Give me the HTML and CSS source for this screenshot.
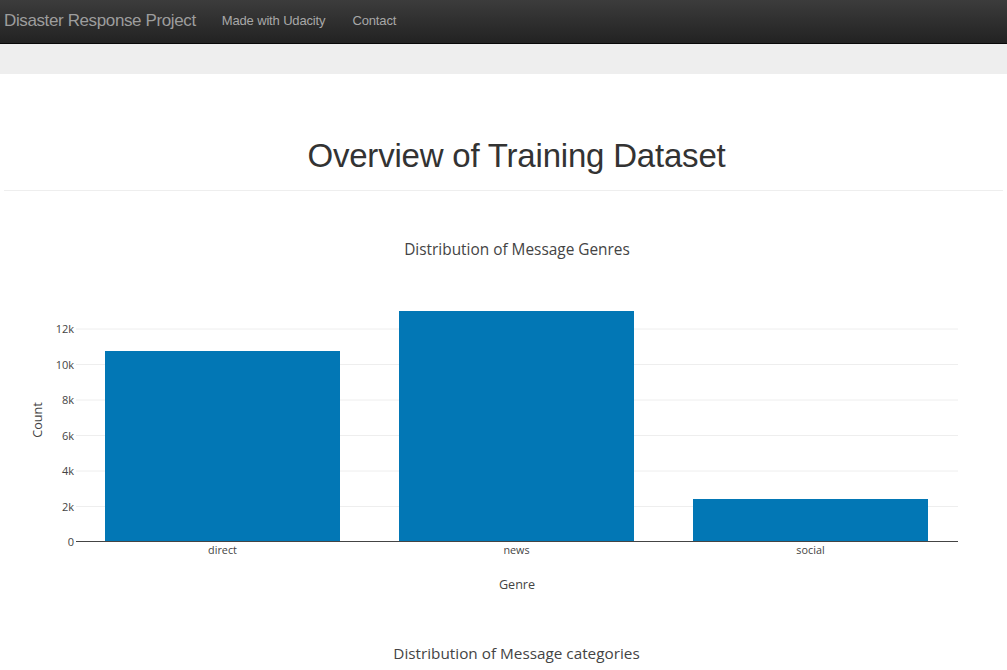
FILE: index.html
```html
<!DOCTYPE html>
<html>
<head>
<meta charset="utf-8">
<link rel="stylesheet" href="styles.css">
</head>
<body>
<nav class="navbar">
  <span class="brand">Disaster Response Project</span>
  <ul class="nav-links">
    <li>Made with Udacity</li>
    <li>Contact</li>
  </ul>
</nav>
<div class="jumbotron"></div>
<main class="container">
  <h1 class="page-title">Overview of Training Dataset</h1>
  <hr class="divider">
  <svg class="chart" width="1007" height="440" viewBox="0 191 1007 440">
    <text class="chart-title" x="517" y="254.5">Distribution of Message Genres</text>
    <g class="grid">
      <line x1="76" x2="958" y1="506.5" y2="506.5"/>
      <line x1="76" x2="958" y1="471" y2="471"/>
      <line x1="76" x2="958" y1="435.5" y2="435.5"/>
      <line x1="76" x2="958" y1="400" y2="400"/>
      <line x1="76" x2="958" y1="364.5" y2="364.5"/>
      <line x1="76" x2="958" y1="329" y2="329"/>
    </g>
    <g class="bars">
      <rect x="105" y="351" width="235" height="190.5"/>
      <rect x="399" y="311" width="235" height="230.5"/>
      <rect x="693" y="499" width="235" height="42.5"/>
    </g>
    <line class="axis" x1="76" x2="958" y1="541.5" y2="541.5"/>
    <g class="ytick">
      <text x="74" y="545.5">0</text>
      <text x="74" y="510.5">2k</text>
      <text x="74" y="475">4k</text>
      <text x="74" y="439.5">6k</text>
      <text x="74" y="404">8k</text>
      <text x="74" y="368.5">10k</text>
      <text x="74" y="333">12k</text>
    </g>
    <g class="xtick">
      <text x="222.5" y="554">direct</text>
      <text x="516.5" y="554">news</text>
      <text x="810.5" y="554">social</text>
    </g>
    <text class="axis-title" x="517" y="589">Genre</text>
    <text class="axis-title" transform="translate(42 420) rotate(-90)" x="0" y="0">Count</text>
  </svg>
  <div class="chart2-title">Distribution of Message categories</div>
</main>
</body>
</html>
```
FILE: styles.css
```css
html, body {
  margin: 0;
  padding: 0;
  background: #fff;
  font-family: "Liberation Sans", Arial, sans-serif;
  color: #333;
  overflow: hidden;
}
.navbar {
  display: flex;
  align-items: center;
  height: 43px;
  background: linear-gradient(#3c3c3c, #222222);
  border-bottom: 1px solid #080808;
  box-sizing: content-box;
}
.brand {
  font-size: 17px;
  letter-spacing: -0.38px;
  color: #9d9d9d;
  padding-left: 4px;
  margin-top: -1px;
}
.nav-links {
  display: flex;
  list-style: none;
  margin: 0 0 0 26px;
  padding: 0;
  gap: 27px;
}
.nav-links li {
  font-size: 13px;
  letter-spacing: -0.15px;
  color: #a8a8a8;
  margin-top: -3px;
}
.jumbotron {
  height: 30px;
  background: #eeeeee;
}
.container {
  padding: 0 4px;
}
.page-title {
  margin: 0;
  padding-top: 63px;
  padding-left: 26px;
  font-size: 33px;
  letter-spacing: -0.2px;
  font-weight: 500;
  line-height: 37px;
  text-align: center;
  color: #333;
}
.divider {
  margin: 16px 0 0;
  border: 0;
  border-top: 1px solid #eeeeee;
}
.chart {
  display: block;
  margin-left: -4px;
  font-family: "Open Sans", sans-serif;
}
.chart-title {
  font-size: 15.4px;
  fill: #444;
  text-anchor: middle;
}
.grid line {
  stroke: #eeeeee;
  stroke-width: 1;
}
.bars rect {
  fill: #0277b5;
}
.axis {
  stroke: #444;
  stroke-width: 1;
}
.ytick text {
  font-size: 11px;
  fill: #444;
  text-anchor: end;
}
.xtick text {
  font-size: 10.8px;
  fill: #444;
  text-anchor: middle;
}
.axis-title {
  font-size: 12.6px;
  fill: #444;
  text-anchor: middle;
}
.chart2-title {
  box-sizing: border-box;
  margin-top: 12px;
  margin-left: -4px;
  padding-left: 26px;
  width: 1007px;
  text-align: center;
  font-family: "Open Sans", sans-serif;
  font-size: 15.3px;
  color: #444;
}
```
